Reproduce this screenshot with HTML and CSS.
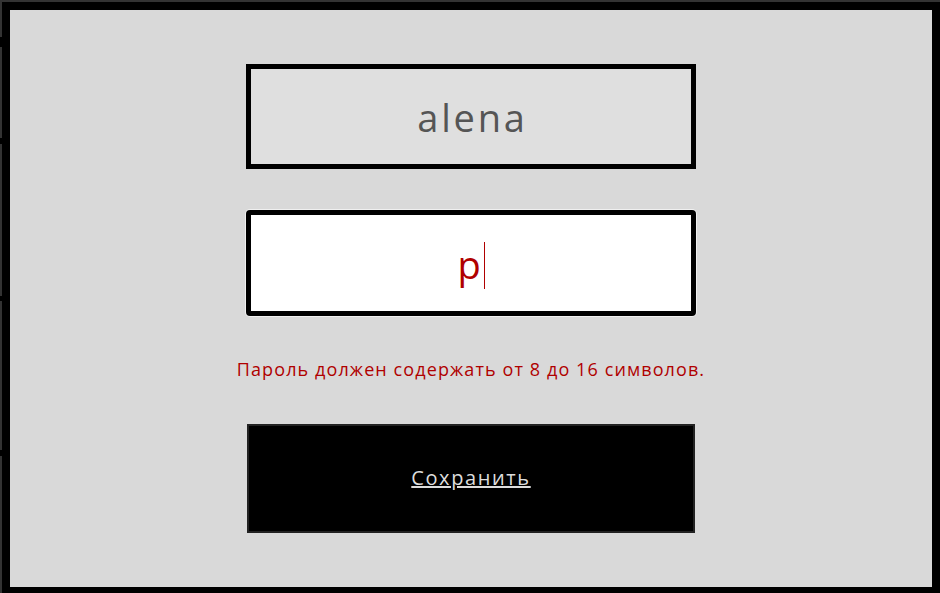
FILE: index.html
```html
<!DOCTYPE html>
<html lang="ru">
<head>
<meta charset="utf-8">
<title>Профиль</title>
<link rel="stylesheet" href="styles.css">
</head>
<body>
<div class="modal">
  <form class="form">
    <input class="field field-name" type="text" value="alena" readonly>
    <div class="field field-pass"><span class="pass-text">p</span><span class="caret"></span></div>
    <p class="error">Пароль должен содержать от 8 до 16 символов.</p>
    <button class="save" type="button">Сохранить</button>
  </form>
</div>
</body>
</html>
```
FILE: styles.css
```css
html, body {
  margin: 0;
  padding: 0;
  height: 100%;
  overflow: hidden;
}
body {
  background-color: #333;
  background-image:
    linear-gradient(#000, #000),
    linear-gradient(#000, #000),
    linear-gradient(#000, #000),
    linear-gradient(#000, #000);
  background-repeat: no-repeat;
  background-size: 2px 10px, 2px 6px, 2px 5px, 2px 6px;
  background-position: 0 37px, 0 138px, 0 296px, 0 450px;
  font-family: "Open Sans", "Liberation Sans", sans-serif;
}
.modal {
  box-sizing: border-box;
  margin: 2px 0 0 2px;
  width: 938px;
  height: 593px;
  border: 8px solid #000;
  background: #d9d9d9;
}
.form {
  display: flex;
  flex-direction: column;
  align-items: center;
  margin: 0;
  padding-top: 54px;
}
.field {
  box-sizing: border-box;
  width: 450px;
  font-family: "Open Sans", "Liberation Sans", sans-serif;
  font-size: 38px;
  text-align: center;
  margin: 0;
}
.field-name {
  height: 105px;
  border: 5px solid #000;
  background: #dfdfdf;
  color: #555;
  padding: 0 0 0 3px;
  outline: none;
  letter-spacing: 2.8px;
}
.field-pass {
  height: 106px;
  margin-top: 41px;
  border: 5px solid #000;
  border-radius: 4px;
  background: #fff;
  box-shadow: 0 0 0 1px #f0f0f0;
  color: #b00000;
  display: flex;
  align-items: center;
  justify-content: center;
}
.pass-text {
  line-height: 1;
  padding-top: 2px;
}
.caret {
  width: 1px;
  height: 47px;
  background: #b00000;
  margin-left: 3px;
  margin-top: 4px;
}
.error {
  margin: 41px 0 0;
  font-size: 18px;
  font-weight: 500;
  line-height: 24px;
  color: #b00000;
  letter-spacing: 1.1px;
}
.save {
  box-sizing: border-box;
  margin-top: 43px;
  width: 448px;
  height: 109px;
  padding: 0 0 2px;
  background: #000;
  border: 2px solid #222;
  color: #ddd;
  font-family: "Open Sans", "Liberation Sans", sans-serif;
  font-size: 20px;
  letter-spacing: 1.6px;
  text-decoration: underline;
  cursor: pointer;
}
```
